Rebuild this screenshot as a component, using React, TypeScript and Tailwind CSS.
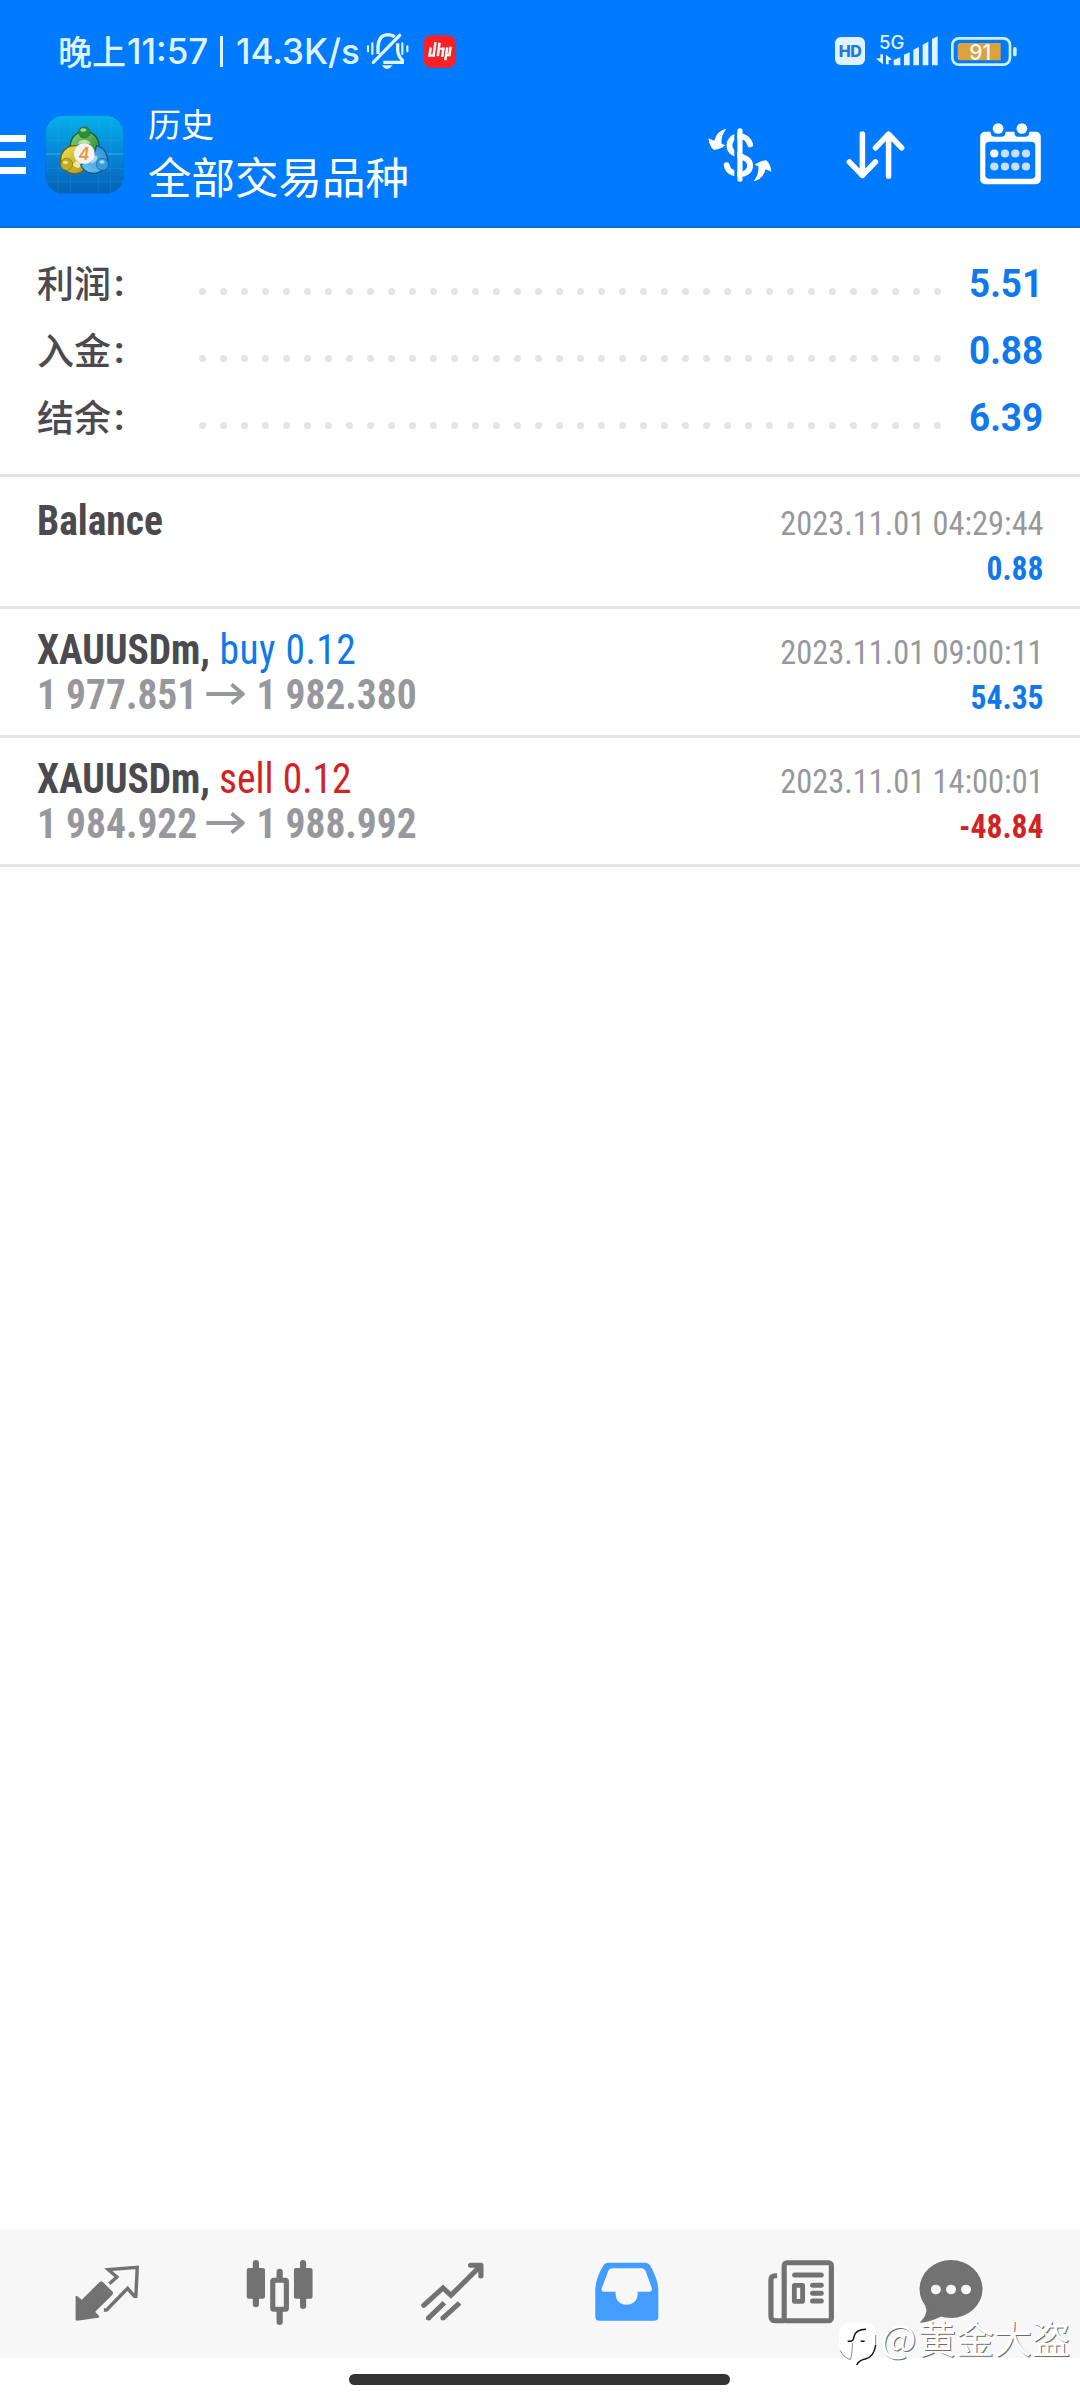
import type { ReactNode } from "react";

const INK = "#727272";

function TabIcon({ viewBox, children }: { viewBox: string; children: ReactNode }) {
  return (
    <svg viewBox={viewBox} preserveAspectRatio="none" className="size-[72px]" fill="none">
      {children}
    </svg>
  );
}

function BellOff() {
  return (
    <svg viewBox="45 24 135 114" className="h-[38px] w-[45px]" fill="none" stroke="#dff3ff" strokeWidth="10">
      <path d="M84 90V68Q86 34 112 32Q126 32 134 39" />
      <path d="M143 58V80Q145 98 157 108V115H100" />
      <path d="M149 34L70 115" strokeLinecap="round" />
      <path d="M95 124H128Q120 135 112 135Q103 135 95 124Z" fill="#dff3ff" stroke="none" />
      <path d="M67 58V90M54 67V82M157 58V90M172 67V82" strokeWidth="6.500" strokeLinecap="round" />
    </svg>
  );
}

function RedApp() {
  return (
    <svg viewBox="221 33 98 98" className="size-[33px]" fill="none">
      <rect x="222" y="34" width="96" height="96" rx="22" fill="#fa2027" />
      <path
        d="M244 70L240 98M258 54L252 98M270 56L265 96M282 70L278 98M293 70L287 108M303 68L299 96"
        stroke="#fff"
        strokeWidth="7.500"
      />
      <path d="M242 94H252M268 74H280M290 93H300" stroke="#fff" strokeWidth="6" />
    </svg>
  );
}

function Signal() {
  return (
    <svg viewBox="166 12 186 114" className="h-[38px] w-[62px]" fill="#dff3ff">
      <text x="175" y="74" fontSize="54" fontFamily="Inter, sans-serif" fontWeight="500" textLength="76" lengthAdjust="spacingAndGlyphs">
        5G
      </text>
      <path d="M179 91H187V121L168 106V103H179ZM196 121V92L212 105V108H204V121Z" />
      <path d="M219 124V108L239 100V124ZM250 124V92L267 85V124ZM278 124V77L295 69V124ZM306 124V62L323 53V124ZM334 124V45L351 37V124Z" />
    </svg>
  );
}

function Battery() {
  return (
    <svg viewBox="391 36 198 87" className="h-[29px] w-[66px]">
      <rect x="395" y="40" width="173" height="79" rx="20" fill="none" stroke="#cdf0ff" strokeWidth="8" />
      <path d="M419 54H540V106H419Q411 106 411 98V62Q411 54 419 54Z" fill="#dca23c" />
      <rect x="577" y="66" width="11" height="28" rx="5" fill="#cdf0ff" />
      <text x="479" y="105" textAnchor="middle" fontSize="66" fontFamily="Inter, sans-serif" fontWeight="500" fill="#f4fbff" textLength="66" lengthAdjust="spacingAndGlyphs">
        91
      </text>
    </svg>
  );
}

function AppLogo() {
  return (
    <svg viewBox="43 46 237 237" className="size-[79px]">
      <defs>
        <linearGradient id="bg" x1="0" y1="0" x2="0" y2="1">
          <stop offset="0" stopColor="#04b0ea" />
          <stop offset="0.5" stopColor="#0685d6" />
          <stop offset="1" stopColor="#0561b4" />
        </linearGradient>
        <linearGradient id="gr" x1="0" y1="0" x2="1" y2="1">
          <stop offset="0" stopColor="#8ed07c" />
          <stop offset="1" stopColor="#1f7f2c" />
        </linearGradient>
        <linearGradient id="ye" x1="0" y1="0" x2="1" y2="1">
          <stop offset="0" stopColor="#f3e64e" />
          <stop offset="1" stopColor="#a8901c" />
        </linearGradient>
        <linearGradient id="bl" x1="1" y1="0" x2="0" y2="1">
          <stop offset="0" stopColor="#2f8fd0" />
          <stop offset="1" stopColor="#6cc6f4" />
        </linearGradient>
      </defs>
      <rect x="44" y="47" width="235" height="235" rx="54" fill="url(#bg)" stroke="#0a6fd0" strokeWidth="2" />
      <path
        d="M82 50V280M120 50V280M204 50V280M240 50V280M46 80H278M46 122H278M46 206H278M46 246H278"
        stroke="#4fb4ee"
        strokeOpacity="0.28"
        strokeWidth="2"
      />
      <path d="M46 163H278" stroke="#7fd0f8" strokeOpacity="0.6" strokeWidth="2.5" />
      <g strokeWidth="4">
        <circle cx="162" cy="138" r="43" fill="url(#gr)" stroke="#17602a" />
        <path d="M142 132Q146 120 160 120Q174 120 180 132Z" fill="#b9e2a8" />
        <circle cx="132" cy="180" r="42" fill="url(#ye)" stroke="#6d6414" />
        <path d="M124 196L136 184L158 196L142 206Z" fill="#efe6a0" />
        <path d="M198 138A42 42 0 1 1 150 196L186 176Z" fill="url(#bl)" stroke="#14558e" />
        <path d="M180 192Q200 190 200 170L190 166Z" fill="#a4d8f6" />
      </g>
      <circle cx="161" cy="98" r="17" fill="#2f8f37" stroke="#1b6a2a" strokeWidth="2" />
      <ellipse cx="158" cy="91" rx="9" ry="5" fill="#9ad894" />
      <circle cx="108" cy="194" r="18" fill="#c3ab26" stroke="#7d7016" strokeWidth="2" />
      <ellipse cx="104" cy="188" rx="8" ry="5" fill="#f0e78c" />
      <circle cx="215" cy="194" r="18" fill="#3a9be0" stroke="#17609c" strokeWidth="2" />
      <ellipse cx="214" cy="187" rx="8" ry="5" fill="#a8dcfa" />
      <circle cx="161" cy="162" r="31" fill="#f4f4f2" />
      <text x="160" y="180" textAnchor="middle" fontSize="50" fontFamily="Inter, sans-serif" fontWeight="600" fontStyle="italic" fill="#f0953a">
        4
      </text>
    </svg>
  );
}

function CurrencyIcon() {
  return (
    <svg viewBox="478 355.5 209 216" preserveAspectRatio="none" className="size-[72px]" fill="none" stroke="#fff">
      <path d="M609 432C600 398 549 398 549 436C549 472 609 460 609 496C609 530 547 530 541 494" strokeWidth="17" strokeLinecap="round" />
      <path d="M567.500 390V536" stroke="#007aff" strokeWidth="9" />
      <path d="M579.500 391V536" strokeWidth="15" strokeLinecap="round" />
      <g fill="#fff" stroke="none">
        <path d="M540 385Q513 390 505 421L488 413Q490 435 503 448Q522 447 537 434L526 430Q524 405 540 385Z" />
        <path transform="rotate(180 579.5 463.5)" d="M540 385Q513 390 505 421L488 413Q490 435 503 448Q522 447 537 434L526 430Q524 405 540 385Z" />
      </g>
    </svg>
  );
}

function SortIcon() {
  return (
    <svg
      viewBox="871 355.5 209 216"
      preserveAspectRatio="none"
      className="size-[72px]"
      fill="none"
      stroke="#fff"
      strokeWidth="16"
      strokeLinecap="round"
      strokeLinejoin="round"
    >
      <path d="M936 400V525M898 484L936 525L974 484" />
      <path d="M1012 527V401M974 442L1012 401L1050 442" />
    </svg>
  );
}

function CalendarIcon() {
  return (
    <svg viewBox="1263 355.5 209 216" preserveAspectRatio="none" className="size-[72px]">
      <rect x="1278" y="394" width="176" height="157" rx="14" fill="#fff" />
      <rect x="1293" y="424" width="145" height="111" rx="12" fill="#007aff" />
      {[1330, 1399].map((x) => (
        <g key={x}>
          <rect x={x - 21.5} y="376" width="43" height="33" rx="12" fill="#007aff" />
          <circle cx={x} cy="384" r="15.500" fill="#fff" />
        </g>
      ))}
      {[459, 498].map((y) =>
        [1319, 1350, 1380, 1411].map((x) => (
          <circle key={`${x}-${y}`} cx={x} cy={y} r="12" fill={x === 1319 && y === 459 ? "#fff" : "#c4e2ff"} />
        )),
      )}
    </svg>
  );
}

function Header() {
  return (
    <header className="flex h-[228px] flex-col border-b-2 border-[#0a6cd6] bg-[#007aff]">
      <div className="flex h-[102px] items-center pr-[63px] pl-[58px] text-[#dff3ff]">
        <div className="flex w-[307px] items-center font-['Inter','Noto_Sans_CJK_SC',sans-serif] text-[35px] leading-none font-medium whitespace-pre">
          <span className="w-[69px] font-['Noto_Sans_CJK_SC',sans-serif] text-[34px] font-medium">晚上</span>
          <span className="w-[93px]">11:57</span>
          <span className="mr-[13px] h-[31px] w-[3px] bg-[#dff3ff]" />
          <span>14.3K/s</span>
        </div>
        <BellOff />
        <span className="w-[13px]" />
        <RedApp />
        <div className="ml-auto flex items-center">
          <span className="mr-[11px] flex h-[28px] w-[30px] items-center justify-center rounded-[6px] bg-[#e2f1ff] font-['Inter',sans-serif] text-[16px] leading-none font-extrabold tracking-[-0.5px] text-[#1f78dc]">
            HD
          </span>
          <span className="-mt-[9px] mr-[13px]">
            <Signal />
          </span>
          <Battery />
        </div>
      </div>
      <div className="flex h-[105px] items-center pr-[33px]">
        <div className="flex w-[45px] flex-col gap-[8.500px]">
          <span className="h-[7.500px] w-[26px] bg-white" />
          <span className="h-[7.500px] w-[26px] bg-white" />
          <span className="h-[7.500px] w-[26px] bg-white" />
        </div>
        <AppLogo />
        <div className="-mt-[6px] ml-[24px] font-['Noto_Sans_CJK_SC',sans-serif] text-white">
          <div className="text-[33px] leading-[48px]">历史</div>
          <div className="text-[43.500px] leading-[58px]">全部交易品种</div>
        </div>
        <div className="ml-auto flex gap-[63px]">
          <CurrencyIcon />
          <SortIcon />
          <CalendarIcon />
        </div>
      </div>
    </header>
  );
}

const totals = [
  { label: "利润", value: "5.51" },
  { label: "入金", value: "0.88" },
  { label: "结余", value: "6.39" },
];

function Totals() {
  return (
    <section className="h-[249px] border-b-[3px] border-[#e4e4e4] pt-[22px]">
      {totals.map((t) => (
        <div key={t.label} className="flex h-[67px] items-center pl-[37px]">
          <div className="-mt-[3px] flex w-[162px] items-center text-[37px] leading-none text-[#4a4a4f]">
            <span className="font-['Noto_Sans_CJK_SC',sans-serif] font-medium">{t.label}</span>
            <span className="mt-[2px] ml-[3px] font-['Roboto',sans-serif] font-bold">:</span>
          </div>
          <div className="mt-[15px] flex w-[742px] justify-between">
            {Array.from({ length: 36 }, (_, i) => (
              <span key={i} className="size-[7px] rounded-full bg-[#e4e4e4]" />
            ))}
          </div>
          <span className="ml-[28px] origin-left scale-x-[.97] font-['Roboto',sans-serif] text-[38px] leading-none font-bold text-[#0f78eb]">
            {t.value}
          </span>
        </div>
      ))}
    </section>
  );
}

function PriceArrow() {
  return (
    <svg viewBox="0 0 41 22" className="mr-[12px] ml-[10px] inline-block h-[22px] w-[41px] align-[4px]" fill="none" stroke="#97989b" strokeWidth="4">
      <path d="M0 11H38M27 1.500L39 11L27 20.500" />
    </svg>
  );
}

type Deal = {
  symbol: string;
  action?: string;
  from?: string;
  to?: string;
  time: string;
  profit: string;
  tone: string;
};

const BLUE = "text-[#0f78eb]";
const RED = "text-[#d12323]";

const deals: Deal[] = [
  { symbol: "Balance", time: "2023.11.01 04:29:44", profit: "0.88", tone: BLUE },
  { symbol: "XAUUSDm,", action: "buy 0.12", from: "1 977.851", to: "1 982.380", time: "2023.11.01 09:00:11", profit: "54.35", tone: BLUE },
  { symbol: "XAUUSDm,", action: "sell 0.12", from: "1 984.922", to: "1 988.992", time: "2023.11.01 14:00:01", profit: "-48.84", tone: RED },
];

function DealRow({ deal }: { deal: Deal }) {
  return (
    <li className="flex h-[129px] items-baseline justify-between border-b-[3px] border-[#e4e4e4] pt-[18px] pr-[36px] pl-[37px] font-['Roboto',sans-serif] leading-[45px] whitespace-nowrap font-stretch-condensed first:h-[132px] first:pt-[21px]">
      <div className="origin-left scale-x-[.94] text-[42px]">
        <div className="font-bold text-[#4a4a4f]">
          {deal.symbol}
          {deal.action && (
            <span className={`font-normal ${deal.tone} ${deal.action.startsWith("buy") ? "tracking-[0.5px]" : ""}`}> {deal.action}</span>
          )}
        </div>
        {deal.from && (
          <div className="font-bold text-[#97989b]">
            {deal.from}
            <PriceArrow />
            {deal.to}
          </div>
        )}
      </div>
      <div className="text-right text-[34px]">
        <div className="origin-right scale-x-[.952] text-[#97989b]">{deal.time}</div>
        <div className={`origin-right scale-x-[.93] font-bold ${deal.tone}`}>{deal.profit}</div>
      </div>
    </li>
  );
}

function TabBar() {
  return (
    <nav className="flex h-[129px] items-center bg-[#f7f7f7] pb-[2px] pl-[20px] *:flex *:w-[173px] *:justify-center">
      <div>
        <TabIcon viewBox="207.7 112 209 216">
          <path d="M225 303Q221 303 221 299V231Q222 226 226 230L239 240L291 187Q296 183 300 187L329 217Q331 221 328 225L278 276L289 289Q291 293 287 294Z" fill={INK} />
          <path d="M303 271H311L372 206L392 230H396L400 143L316 150L341 172L319 192" stroke={INK} strokeWidth="10" />
        </TabIcon>
      </div>
      <div>
        <TabIcon viewBox="710 112 209 216">
          <path d="M744.500 130V254M881.500 130V259M813.500 156V176M813.500 274V307" stroke={INK} strokeWidth="18" strokeLinecap="round" />
          <rect x="718" y="145" width="53" height="92" rx="6" fill={INK} />
          <rect x="855" y="145" width="54" height="92" rx="6" fill={INK} />
          <rect x="793.5" y="181.500" width="39.500" height="87" rx="3" stroke={INK} strokeWidth="15" fill="#f7f7f7" />
        </TabIcon>
      </div>
      <div>
        <TabIcon viewBox="1212.5 112 209 216">
          <g stroke={INK} strokeWidth="15">
            <path d="M1232 257L1288 205L1311 227L1396 140" strokeLinecap="round" />
            <path d="M1246 295L1292 249M1288 295L1336 250" />
            <circle cx="1246" cy="295" r="7.500" fill={INK} stroke="none" />
            <circle cx="1288" cy="295" r="7.500" fill={INK} stroke="none" />
            <path d="M1368 136.500H1398V169" strokeLinecap="round" strokeLinejoin="round" />
          </g>
        </TabIcon>
      </div>
      <div>
        <TabIcon viewBox="146.7 112 209 216">
          <path
            fill="#429dff"
            fillRule="evenodd"
            d="M200 129H308Q316 129 321 137Q345 180 345 212V292Q345 303 333 303H174Q162 303 162 292V212Q163 175 185 138Q190 129 200 129ZM212 146H296Q304 146 309 156L326 205Q328 216 320 216H285V222C285 242 272 255 252 255C234 255 221 242 221 222V216H186Q178 216 181 205L199 156Q203 146 212 146Z"
          />
        </TabIcon>
      </div>
      <div>
        <TabIcon viewBox="649 112 209 216">
          <g stroke={INK} strokeWidth="15" strokeLinecap="round">
            <rect x="710.5" y="129.500" width="137" height="174" rx="8" />
            <path d="M690 168.500H684Q672 168.500 672 181V288Q672 303.500 687 303.500H712" strokeLinecap="butt" />
            <path d="M741 166H818M793 197H818M793 221H818M793 244H818" />
            <rect x="740" y="197" width="24" height="48" rx="1" strokeWidth="14" />
          </g>
        </TabIcon>
      </div>
      <div className="!w-[129px]">
        <TabIcon viewBox="1086 112 209 216">
          <ellipse cx="1193.5" cy="208" rx="91.500" ry="87" fill={INK} />
          <path d="M1117 258Q1132 278 1102 309Q1130 308 1170 288Z" fill={INK} />
          <circle cx="1149.5" cy="209.500" r="14.500" fill="#f7f7f7" />
          <circle cx="1193.5" cy="209.500" r="14.500" fill="#f7f7f7" />
          <circle cx="1237" cy="209.500" r="14.500" fill="#f7f7f7" />
        </TabIcon>
      </div>
    </nav>
  );
}

function Watermark() {
  return (
    <div className="absolute right-[10px] bottom-[33px] flex items-start text-white">
      <svg viewBox="54 238 120 138" className="mt-[1px] h-[46px] w-[40px]" fill="none">
        <path
          d="M85 243H140Q166 245 168 275V312Q166 342 142 350Q118 354 110 369L98 352Q60 345 57 310V275Q58 245 85 243Z"
          fill="#fff"
        />
        <path d="M83 299H92Q100 298 102 285Q107 263 138 263M122 299H134M167 310Q162 345 138 351Q117 355 110 370" stroke="#111" strokeWidth="4.500" />
        <path d="M98 304Q97 330 92 354M61 326Q69 346 91 354M167 280V312" stroke="#555" strokeWidth="2" />
      </svg>
      <span className="-mt-[2px] ml-[3px] font-['Noto_Sans_CJK_SC',sans-serif] text-[38px] leading-[38px] [text-shadow:1px_1px_0_#6b6b6b]">
        <span className="mr-[1.500px]">@</span>黄金大盗
      </span>
    </div>
  );
}

export default function App() {
  return (
    <div className="relative flex h-[2400px] w-[1080px] flex-col overflow-hidden bg-white">
      <Header />
      <Totals />
      <ul>
        {deals.map((d) => (
          <DealRow key={d.time} deal={d} />
        ))}
      </ul>
      <div className="mt-auto">
        <TabBar />
        <div className="flex h-[42px] justify-center pt-[16px] pr-[2px]">
          <span className="h-[10.500px] w-[381px] rounded-full bg-[#333]" />
        </div>
      </div>
      <Watermark />
    </div>
  );
}
